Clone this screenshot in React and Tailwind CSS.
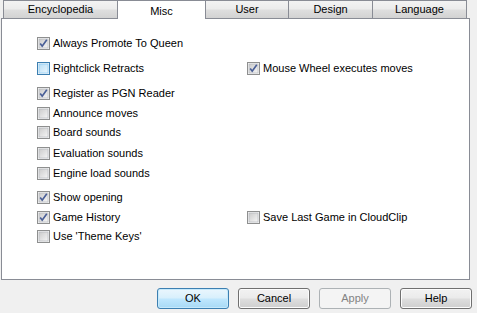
import React from "react";

const tabs = [
  { label: "Encyclopedia", w: "w-[114px]" },
  { label: "Misc", w: "w-[88px]", active: true },
  { label: "User", w: "w-[83px]" },
  { label: "Design", w: "w-[84px]" },
  { label: "Language", w: "w-[95px] border-r" },
];

// each row: left option, optional right option, top margin before it
const rows = [
  { mt: "mt-0", left: { label: "Always Promote To Queen", checked: true } },
  {
    mt: "mt-[12px]",
    left: { label: "Rightclick Retracts", checked: false, hover: true },
    right: { label: "Mouse Wheel executes moves", checked: true },
  },
  { mt: "mt-[12px]", left: { label: "Register as PGN Reader", checked: true } },
  { mt: "mt-[7px]", left: { label: "Announce moves", checked: false } },
  { mt: "mt-[6px]", left: { label: "Board sounds", checked: false } },
  { mt: "mt-[8px]", left: { label: "Evaluation sounds", checked: false } },
  { mt: "mt-[7px]", left: { label: "Engine load sounds", checked: false } },
  { mt: "mt-[11px]", left: { label: "Show opening", checked: true } },
  {
    mt: "mt-[7px]",
    left: { label: "Game History", checked: true },
    right: { label: "Save Last Game in CloudClip", checked: false },
  },
  { mt: "mt-[6px]", left: { label: "Use 'Theme Keys'", checked: false } },
];

const CheckBox = ({ checked, hover }) => (
  <svg width="13" height="13" viewBox="0 0 13 13" className="shrink-0">
    <defs>
      <linearGradient id={hover ? "cbh" : "cbn"} x1="0" y1="0" x2="1" y2="1">
        {hover ? (
          <>
            <stop offset="0" stopColor="#b9def5" />
            <stop offset="1" stopColor="#eaf6fd" />
          </>
        ) : (
          <>
            <stop offset="0" stopColor="#cbcbcb" />
            <stop offset="1" stopColor="#f6f6f6" />
          </>
        )}
      </linearGradient>
    </defs>
    <rect x="0.5" y="0.5" width="12" height="12" fill="#f4f4f4" stroke={hover ? "#3c7fb1" : "#8e8f8f"} />
    <rect x="2" y="2" width="9" height="9" fill={`url(#${hover ? "cbh" : "cbn"})`} stroke={hover ? "#79c6f9" : "#aeb3b9"} strokeWidth="0.6" />
    {checked && (
      <path d="M3.2 6.6 L5.2 9.2 L9.8 2.8" fill="none" stroke="#4a5f97" strokeWidth="1.7" />
    )}
  </svg>
);

const Option = ({ label, checked, hover }) => (
  <div className="flex items-center gap-[3px] h-[13px]">
    <CheckBox checked={checked} hover={hover} />
    <span className="whitespace-nowrap leading-none">{label}</span>
  </div>
);

const btnBase = "w-[72px] h-[21px] rounded-[3px] border flex items-center justify-center";

export default function App() {
  return (
    <div
      className="w-[477px] h-[313px] bg-[#f0f0f0] text-[11px] text-black overflow-hidden"
      style={{ fontFamily: "'Liberation Sans', Arial, sans-serif" }}
    >
      <div className="flex h-[18px] pl-[3px]">
        {tabs.map((t) =>
          t.active ? (
            <div
              key={t.label}
              className={`${t.w} h-[19px] relative z-10 bg-white border-l border-t border-[#898c95] flex justify-center pt-[2px]`}
            >
              {t.label}
            </div>
          ) : (
            <div
              key={t.label}
              className={`${t.w} h-[18px] border-l border-t border-[#898c95] bg-[linear-gradient(#f3f3f3_0%,#ececec_45%,#dedede_55%,#d2d2d2_100%)] flex items-center justify-center`}
            >
              {t.label}
            </div>
          )
        )}
      </div>

      <div className="ml-[1px] w-[469px] h-[262px] bg-white border border-[#898c95] pt-[18px] pl-[35px]">
        {rows.map((r, i) => (
          <div key={i} className={`flex ${r.mt}`}>
            <div className="w-[210px]">
              <Option {...r.left} />
            </div>
            {r.right && <Option {...r.right} />}
          </div>
        ))}
      </div>

      <div className="flex justify-end gap-[9px] pr-[5px] mt-[8px]">
        <button className={`${btnBase} border-[#3c7fb1] bg-[linear-gradient(#eaf6fd_0%,#d9f0fc_45%,#bee6fd_55%,#a7d9f5_100%)] shadow-[inset_0_0_0_1px_#c6e9fb]`}>
          OK
        </button>
        <button className={`${btnBase} border-[#707070] bg-[linear-gradient(#f2f2f2_0%,#ebebeb_45%,#dddddd_55%,#cfcfcf_100%)] shadow-[inset_0_0_0_1px_#fcfcfc]`}>
          Cancel
        </button>
        <button className={`${btnBase} border-[#adb2b5] bg-[#f4f4f4] text-[#838383]`}>
          Apply
        </button>
        <button className={`${btnBase} border-[#707070] bg-[linear-gradient(#f2f2f2_0%,#ebebeb_45%,#dddddd_55%,#cfcfcf_100%)] shadow-[inset_0_0_0_1px_#fcfcfc]`}>
          Help
        </button>
      </div>
    </div>
  );
}
